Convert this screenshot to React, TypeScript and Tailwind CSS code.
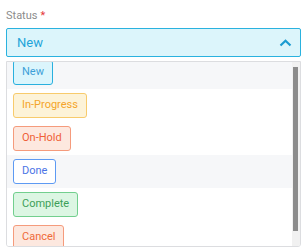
const options = [
  { label: 'New', cls: 'border-[#29b0de] bg-[#dbf5fc] text-[#3d9fd8]', row: 'bg-[#f6f7f9]' },
  { label: 'In-Progress', cls: 'border-[#f8cb6c] bg-[#fdf3d8] text-[#f4a52a]', row: 'bg-white' },
  { label: 'On-Hold', cls: 'border-[#f59b7c] bg-[#fde8df] text-[#ef5f37]', row: 'bg-white' },
  { label: 'Done', cls: 'border-[#5d9af3] bg-white text-[#4b74e6]', row: 'bg-[#f6f7f9]' },
  { label: 'Complete', cls: 'border-[#72cf8e] bg-[#dcf6e3] text-[#3c9f58]', row: 'bg-white' },
  { label: 'Cancel', cls: 'border-[#f59b7c] bg-[#fde8df] text-[#ef6a3a]', row: 'bg-white' },
];

export default function App() {
  return (
    <div className="h-[252px] w-[307px] bg-white px-[6px] pt-[9px] font-['Roboto','Liberation_Sans',sans-serif]">
      <p className="flex h-[12px] items-center gap-[3px] text-[11px] leading-none text-[#8c8c8c]">
        Status <span className="text-[#e5383b]">*</span>
      </p>

      <div className="mt-[7px] flex h-[29px] items-center justify-between rounded-[2px] border border-[#2ab2df] bg-[#dcf5fb] pl-[10px] pr-[8px]">
        <span className="text-[13px] text-[#1fa4d9]">New</span>
        <svg width="13" height="8" viewBox="0 0 13 8" fill="none">
          <path d="M1.5 6.5L6.5 1.8L11.5 6.5" stroke="#1b9bd1" strokeWidth="2.2" />
        </svg>
      </div>

      <div className="mt-[4px] flex h-[186px] overflow-hidden rounded-b-[3px] border border-[#dcdde0]">
        <div className="flex-1 overflow-hidden">
          <div className="-mt-[6px]">
            {options.map((o) => (
              <div key={o.label} className={`flex h-[33px] items-center pl-[6px] ${o.row}`}>
                <span
                  className={`flex h-[25px] items-center rounded-[3px] border px-[8px] text-[11px] ${o.cls}`}
                >
                  {o.label}
                </span>
              </div>
            ))}
          </div>
        </div>
        <div className="flex w-[8px] flex-col bg-[#f1f1f1] pt-[5px] pb-[15px]">
          <div className="ml-[1px] w-[5px] flex-1 bg-[#8c8c8c]" />
        </div>
      </div>
    </div>
  );
}
